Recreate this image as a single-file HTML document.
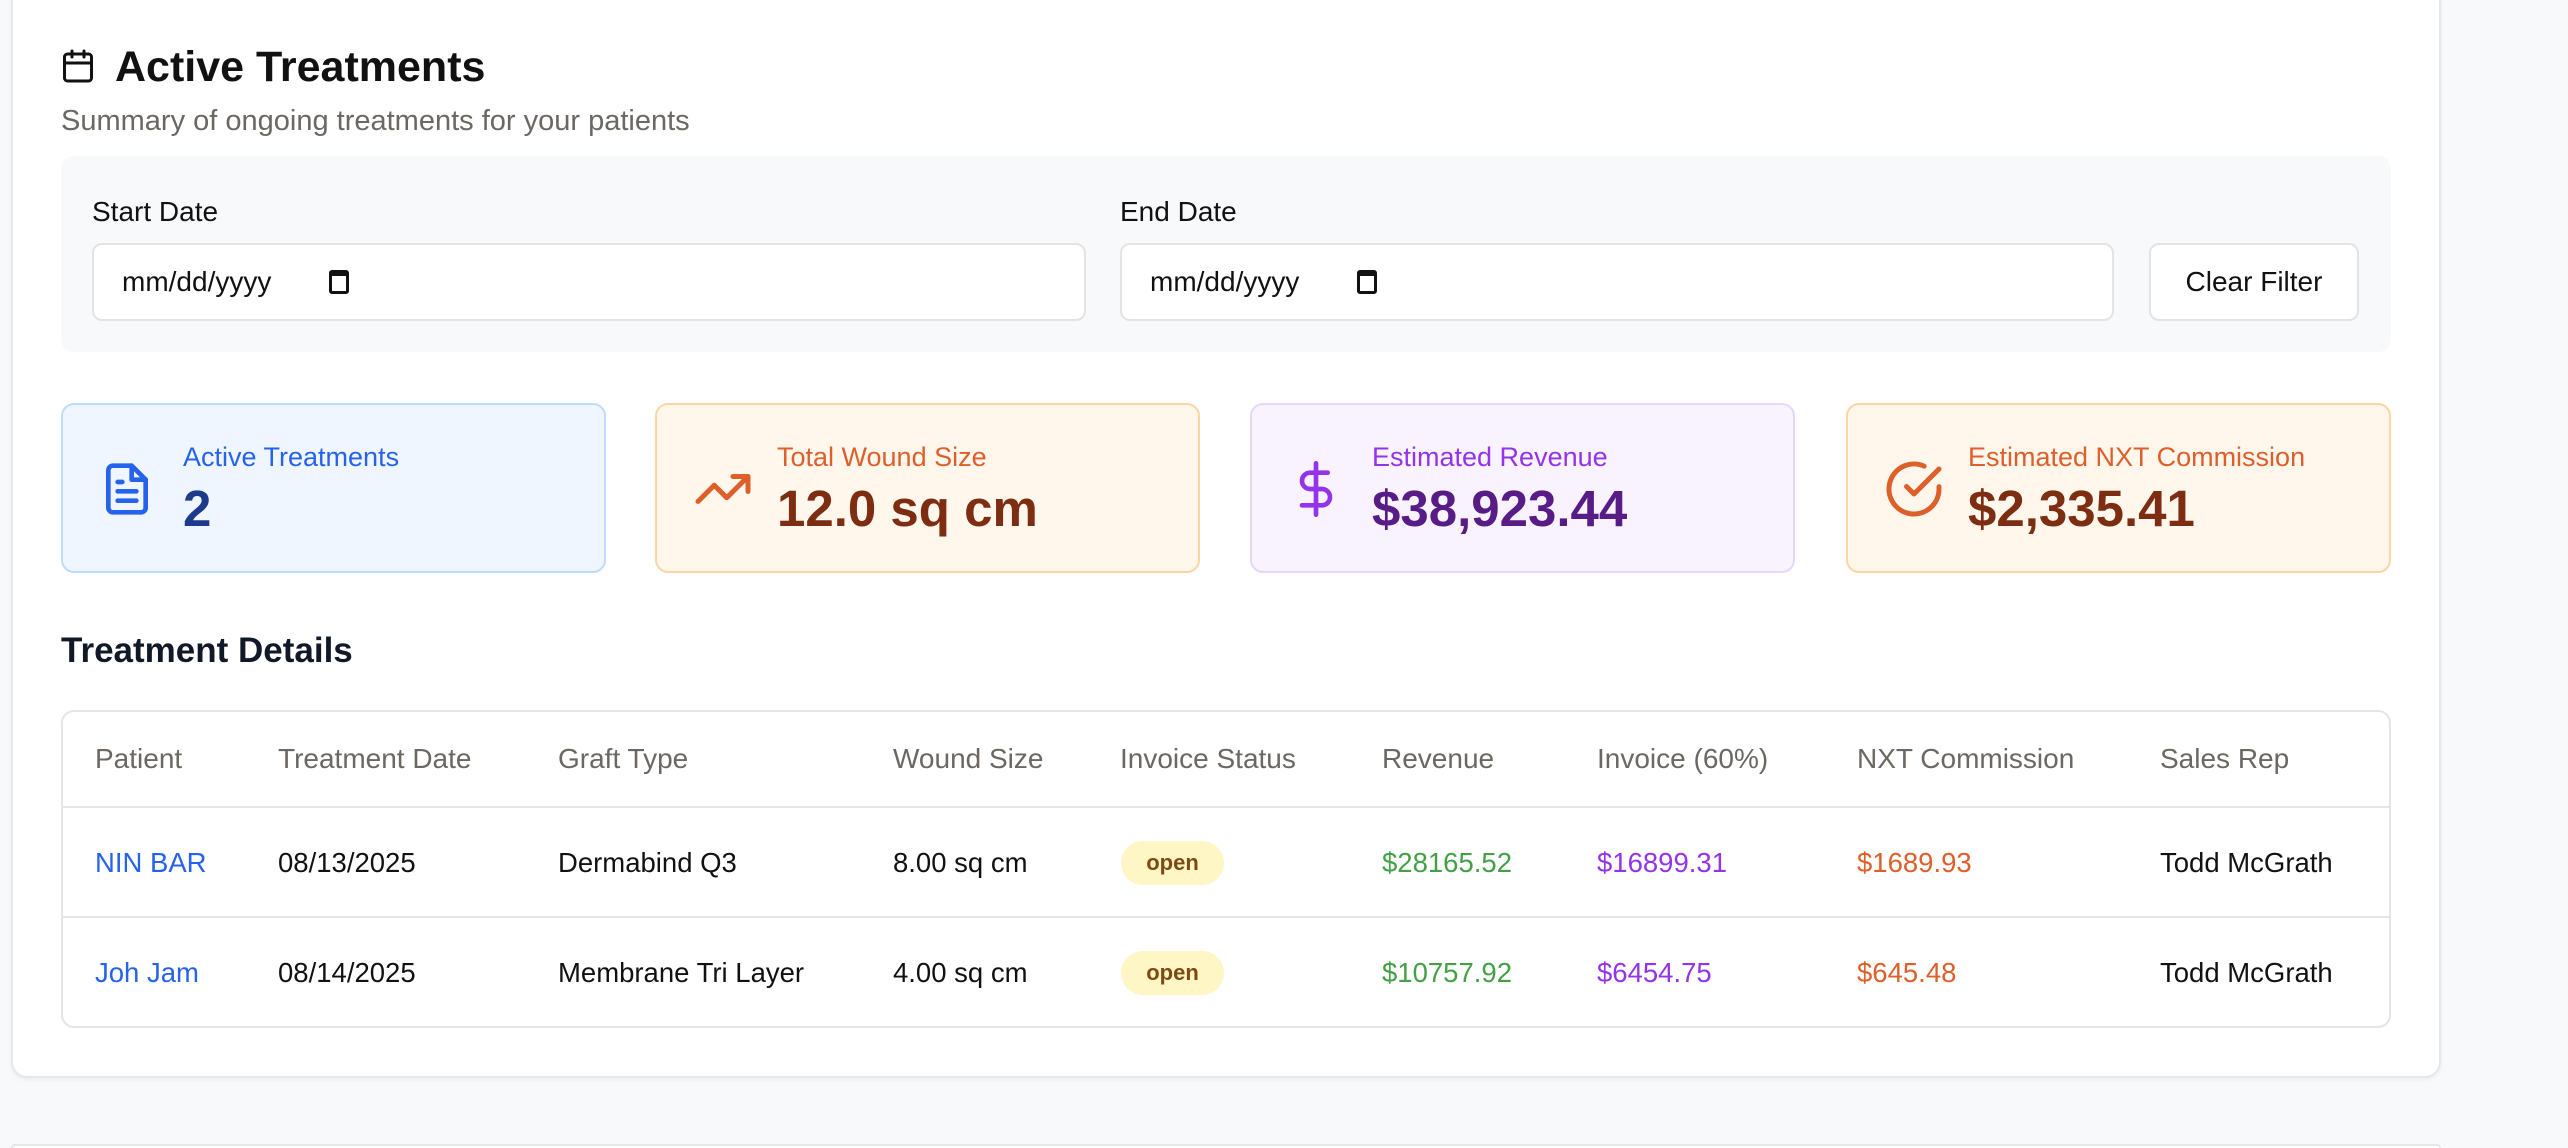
<!DOCTYPE html>
<html><head><meta charset="utf-8"><style>
*{box-sizing:border-box;margin:0;padding:0}
html,body{width:2568px;height:1148px;overflow:hidden}
body{background:#f8f9fb;font-family:"Liberation Sans",sans-serif;position:relative;color:#111}
.a{position:absolute;white-space:nowrap}
.card{position:absolute;left:11px;top:-20px;width:2430px;height:1098px;background:#fff;border:2px solid #e5e7eb;border-radius:16px;box-shadow:0 2px 4px rgba(0,0,0,.05)}
.card2{position:absolute;left:11px;top:1144px;width:2430px;height:4px;background:#fff;border:2px solid #e5e7eb;border-bottom:none;border-radius:16px 16px 0 0}
.filt{position:absolute;left:61px;top:156px;width:2330px;height:196px;background:#f8f9fb;border-radius:13px}
.inp{position:absolute;top:243px;height:78px;background:#fff;border:2px solid #e3e3e3;border-radius:10px;font-size:28px;line-height:74px;padding-left:28px}
.stat{position:absolute;top:403px;width:545px;height:170px;border:2px solid;border-radius:13px}
.stat .l{position:absolute;left:120px;top:37px;font-size:27px}
.stat .v{position:absolute;left:120px;top:74px;font-size:51px;font-weight:bold}
.stat svg{position:absolute;left:36px;top:54px}
.tbl{position:absolute;left:61px;top:710px;width:2330px;height:318px;border:2px solid #e5e5e5;border-radius:13px}
.hr{position:absolute;left:61px;width:2330px;height:2px;background:#e5e5e5}
.th{position:absolute;top:743px;font-size:28px;color:#6b6762}
.td{position:absolute;font-size:27.5px;color:#111}
.badge{position:absolute;left:1121px;width:103px;height:44px;border-radius:22px;background:#fef6c5;color:#7c4a12;font-weight:bold;font-size:22px;text-align:center;line-height:44px}
.cal{display:inline-block;width:20px;height:24px;border:3px solid #111;border-top-width:6px;border-radius:3px;margin-left:50px;vertical-align:-3px}
</style></head><body>
<div class="card"></div>
<div class="card2"></div>
<svg class="a" style="left:60px;top:46px" width="36" height="40" viewBox="0 0 24 24" fill="none" stroke="#111" stroke-width="2" stroke-linecap="round" stroke-linejoin="round"><rect x="3" y="4" width="18" height="18" rx="2"/><path d="M16 2v4M8 2v4M3 10h18"/></svg>
<div class="a" style="left:115px;top:43px;font-size:43px;font-weight:bold;color:#111">Active Treatments</div>
<div class="a" style="left:61px;top:105px;font-size:29px;color:#6b6762">Summary of ongoing treatments for your patients</div>
<div class="filt"></div>
<div class="a" style="left:92px;top:196px;font-size:28px;font-weight:500">Start Date</div>
<div class="a" style="left:1120px;top:196px;font-size:28px;font-weight:500">End Date</div>
<div class="inp" style="left:92px;width:994px">mm/dd/yyyy <span class="cal"></span></div>
<div class="inp" style="left:1120px;width:994px">mm/dd/yyyy <span class="cal"></span></div>
<div class="inp" style="left:2149px;width:210px;padding:0;text-align:center;font-weight:500">Clear Filter</div>

<div class="stat" style="left:61px;background:#eff6ff;border-color:#bfdbfe"><svg width="56" height="60" viewBox="0 0 24 24" fill="none" stroke="#2563eb" stroke-width="2" stroke-linecap="round" stroke-linejoin="round"><path d="M14 2H6a2 2 0 0 0-2 2v16a2 2 0 0 0 2 2h12a2 2 0 0 0 2-2V8z"/><path d="M14 2v6h6M16 13H8M16 17H8M10 9H8"/></svg><div class="l" style="color:#2563eb">Active Treatments</div><div class="v" style="color:#1e3a8a">2</div></div>
<div class="stat" style="left:655px;background:#fff6ec;border-color:#fbd5a5"><svg width="60" height="60" viewBox="0 0 24 24" fill="none" stroke="#dd5f2a" stroke-width="2" stroke-linecap="round" stroke-linejoin="round"><path d="M22 7l-8.5 8.5-5-5L2 17"/><path d="M16 7h6v6"/></svg><div class="l" style="color:#dd5f2a">Total Wound Size</div><div class="v" style="color:#7c2d12">12.0 sq cm</div></div>
<div class="stat" style="left:1250px;background:#f8f3ff;border-color:#e6d5fd"><svg width="56" height="60" viewBox="0 0 24 24" fill="none" stroke="#9333ea" stroke-width="2" stroke-linecap="round" stroke-linejoin="round"><path d="M12 1v22M17 5H9.5a3.5 3.5 0 0 0 0 7h5a3.5 3.5 0 0 1 0 7H6"/></svg><div class="l" style="color:#9333ea">Estimated Revenue</div><div class="v" style="color:#581c87">$38,923.44</div></div>
<div class="stat" style="left:1846px;background:#fff6ec;border-color:#fbd5a5"><svg width="60" height="60" viewBox="0 0 24 24" fill="none" stroke="#dd5f2a" stroke-width="2" stroke-linecap="round" stroke-linejoin="round"><path d="M22 11.08V12a10 10 0 1 1-5.93-9.14"/><path d="M22 4L12 14.01l-3-3"/></svg><div class="l" style="color:#dd5f2a">Estimated NXT Commission</div><div class="v" style="color:#7c2d12">$2,335.41</div></div>

<div class="a" style="left:61px;top:631px;font-size:35px;font-weight:bold;color:#111827">Treatment Details</div>
<div class="tbl"></div>
<div class="hr" style="top:806px"></div>
<div class="hr" style="top:916px"></div>
<div class="th" style="left:95px">Patient</div>
<div class="th" style="left:278px">Treatment Date</div>
<div class="th" style="left:558px">Graft Type</div>
<div class="th" style="left:893px">Wound Size</div>
<div class="th" style="left:1120px">Invoice Status</div>
<div class="th" style="left:1382px">Revenue</div>
<div class="th" style="left:1597px">Invoice (60%)</div>
<div class="th" style="left:1857px">NXT Commission</div>
<div class="th" style="left:2160px">Sales Rep</div>

<div class="td" style="left:95px;top:847px;color:#2563eb">NIN BAR</div>
<div class="td" style="left:278px;top:847px">08/13/2025</div>
<div class="td" style="left:558px;top:847px">Dermabind Q3</div>
<div class="td" style="left:893px;top:847px">8.00 sq cm</div>
<div class="badge" style="top:841px">open</div>
<div class="td" style="left:1382px;top:847px;color:#43a047">$28165.52</div>
<div class="td" style="left:1597px;top:847px;color:#9333ea">$16899.31</div>
<div class="td" style="left:1857px;top:847px;color:#dd5f2a">$1689.93</div>
<div class="td" style="left:2160px;top:847px">Todd McGrath</div>

<div class="td" style="left:95px;top:957px;color:#2563eb">Joh Jam</div>
<div class="td" style="left:278px;top:957px">08/14/2025</div>
<div class="td" style="left:558px;top:957px">Membrane Tri Layer</div>
<div class="td" style="left:893px;top:957px">4.00 sq cm</div>
<div class="badge" style="top:951px">open</div>
<div class="td" style="left:1382px;top:957px;color:#43a047">$10757.92</div>
<div class="td" style="left:1597px;top:957px;color:#9333ea">$6454.75</div>
<div class="td" style="left:1857px;top:957px;color:#dd5f2a">$645.48</div>
<div class="td" style="left:2160px;top:957px">Todd McGrath</div>
</body></html>
